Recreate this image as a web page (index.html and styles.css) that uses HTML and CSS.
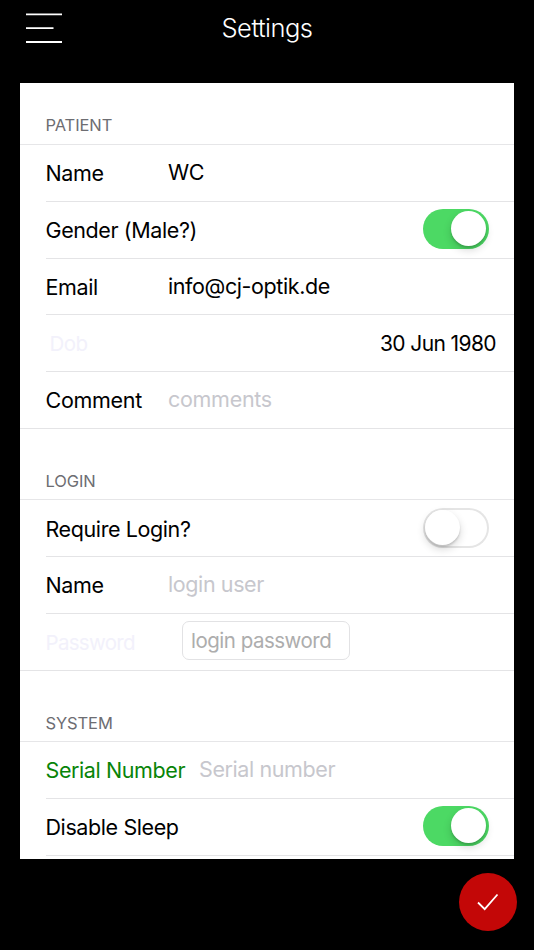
FILE: index.html
```html
<!DOCTYPE html>
<html lang="en">
<head>
    <meta charset="UTF-8">
    <meta name="viewport" content="width=device-width, initial-scale=1.0">
    <title>Settings</title>
    <link rel="stylesheet" href="styles.css">
</head>
<body>
    <header class="top-bar">
        <svg class="menu-icon" width="36" height="30" viewBox="0 0 36 30">
            <path d="M0 1.4H36M0 15.2H27.5M0 29H36" fill="none" stroke="#fff" stroke-width="1.8"/>
        </svg>
        <h1>Settings</h1>
    </header>

    <main class="card">
        <section>
            <h2>PATIENT</h2>
            <div class="row">
                <span class="label">Name</span>
                <span class="value">WC</span>
            </div>
            <div class="row">
                <span class="label wide">Gender (Male?)</span>
                <span class="switch on"></span>
            </div>
            <div class="row">
                <span class="label">Email</span>
                <span class="value">info@cj-optik.de</span>
            </div>
            <div class="row">
                <span class="label faded dob">Dob</span>
                <span class="value date">30 Jun 1980</span>
            </div>
            <div class="row last">
                <span class="label comment">Comment</span>
                <span class="value placeholder comment">comments</span>
            </div>
        </section>

        <section>
            <h2>LOGIN</h2>
            <div class="row">
                <span class="label wide">Require Login?</span>
                <span class="switch"></span>
            </div>
            <div class="row">
                <span class="label">Name</span>
                <span class="value placeholder">login user</span>
            </div>
            <div class="row last">
                <span class="label faded password">Password</span>
                <span class="password-box">login password</span>
            </div>
        </section>

        <section>
            <h2>SYSTEM</h2>
            <div class="row">
                <span class="label serial">Serial Number</span>
                <span class="value placeholder">Serial number</span>
            </div>
            <div class="row">
                <span class="label wide">Disable Sleep</span>
                <span class="switch on"></span>
            </div>
        </section>
    </main>

    <div class="save-btn">
        <svg width="22" height="18" viewBox="0 0 22 18">
            <path d="M1 9.5L7.7 16.2L20.5 1.5" fill="none" stroke="#fff" stroke-width="1.8"/>
        </svg>
    </div>
</body>
</html>
```

FILE: styles.css
```css
* {
    box-sizing: border-box;
}

body {
    margin: 0;
    height: 950px;
    overflow: hidden;
    background-color: #000;
    color: #000;
    font-family: Inter, "Liberation Sans", sans-serif;
    font-size: 21.5px;
    letter-spacing: -0.4px;
    display: flex;
    flex-direction: column;
}

.top-bar {
    height: 83px;
    flex-shrink: 0;
    display: grid;
    grid-template-columns: 1fr auto 1fr;
    align-items: start;
    padding: 13px 26px 0;
}

h1 {
    margin: 0;
    color: #fff;
    font-size: 25.5px;
    font-weight: 300;
    line-height: 29px;
    letter-spacing: -0.5px;
}

.card {
    width: 494.4px;
    height: 776px;
    flex-shrink: 0;
    margin-left: 20px;
    background-color: #fff;
    overflow: hidden;
}

h2 {
    margin: 0;
    height: 71.6px;
    padding: 42px 0 0 25.5px;
    border-bottom: 1px solid #e6e6e8;
    color: #6d6d72;
    font-size: 16.5px;
    font-weight: 400;
    line-height: 20px;
    letter-spacing: -0.1px;
}

section:first-child h2 {
    height: 62px;
    padding-top: 32px;
}

.row {
    height: 56.75px;
    margin-left: 25.5px;
    padding-right: 25.4px;
    border-bottom: 1px solid #e4e4e6;
    display: flex;
    align-items: center;
}

.row.last {
    margin-left: 0;
    padding-left: 25.5px;
}

.label {
    width: 122.5px;
    padding-top: 0.6px;
    white-space: nowrap;
}

.label.wide {
    width: auto;
}

.value {
    padding-bottom: 1.4px;
}

.comment {
    letter-spacing: -0.3px;
}

.faded {
    color: #f2f1fb;
    font-size: 20.5px;
    letter-spacing: -0.5px;
}

.dob {
    padding-left: 4px;
}

.password {
    letter-spacing: -0.7px;
}

.date {
    margin-left: auto;
    margin-right: -7px;
    padding-bottom: 0;
    font-size: 21px;
    letter-spacing: -0.6px;
}

.placeholder {
    color: #c7c7cd;
}

.serial {
    width: 153.5px;
    color: #088408;
}

.password-box {
    width: 168px;
    height: 39px;
    margin: -3px 0 0 13.5px;
    padding-left: 8.5px;
    border: 1px solid #e2e2e4;
    border-radius: 7px;
    color: #adadad;
    font-size: 20.5px;
    line-height: 37px;
    letter-spacing: -0.5px;
    white-space: nowrap;
}

.switch {
    width: 66px;
    height: 40px;
    margin: -1.4px 0 0 auto;
    padding: 2px;
    border-radius: 20px;
    box-shadow: inset 0 0 0 2px #e5e5e5;
}

.switch::before {
    content: "";
    display: block;
    width: 35px;
    height: 35px;
    border-radius: 50%;
    background-color: #fff;
    box-shadow: 0 4px 8px rgba(0, 0, 0, 0.16), 0 2px 2px rgba(0, 0, 0, 0.14);
}

.switch.on {
    background-color: #4cd964;
    box-shadow: none;
}

.switch.on::before {
    margin-left: 26px;
}

.save-btn {
    width: 58px;
    height: 58px;
    flex-shrink: 0;
    margin: 14px 17px 0 auto;
    border-radius: 50%;
    background-color: #c30707;
    display: flex;
    justify-content: center;
    align-items: center;
}
```
